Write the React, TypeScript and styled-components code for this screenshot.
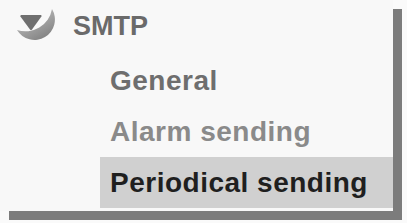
import React from 'react';
import styled, { createGlobalStyle } from 'styled-components';

const GlobalStyle = createGlobalStyle`
  html, body {
    margin: 0;
    padding: 0;
    height: 100%;
    background: #fafafa;
    font-family: "Liberation Sans", Arial, sans-serif;
  }
`;

const Page = styled.div`
  width: 407px;
  height: 223px;
  overflow: hidden;
`;

const Panel = styled.div`
  width: 393px;
  height: 211px;
  background: #f8f8f8;
  box-shadow: 9px 9px 0 #7c7c7c;
  display: flex;
  flex-direction: column;
`;

const Header = styled.div`
  height: 55px;
  flex: none;
  display: flex;
  align-items: flex-start;
  padding-left: 14px;
  gap: 17px;
`;

const Toggle = styled.svg`
  width: 42px;
  height: 38px;
  margin-top: 6px;
  flex: none;
`;

const HeaderLabel = styled.span`
  font-size: 27px;
  font-weight: bold;
  line-height: 47px;
  padding-top: 3px;
  color: #6a6a6a;
`;

const Items = styled.ul`
  list-style: none;
  margin: 0;
  padding: 0 0 0 100px;
`;

const Item = styled.li<{ $active?: boolean; $tone: string }>`
  height: 51px;
  line-height: 51px;
  padding-left: 10px;
  font-size: 28px;
  font-weight: bold;
  letter-spacing: 0.5px;
  color: ${(p) => p.$tone};
  background: ${(p) => (p.$active ? '#d0d0d0' : 'transparent')};
`;

const items = [
  { label: 'General', tone: '#6e6e6e' },
  { label: 'Alarm sending', tone: '#8a8a8a' },
  { label: 'Periodical sending', tone: '#1f1f1f', active: true },
];

export default function App() {
  return (
    <Page>
      <GlobalStyle />
      <Panel>
        <Header>
          <Toggle viewBox="0 0 42 38">
            <defs>
              <linearGradient id="swoosh" x1="0" y1="0.1" x2="0.6" y2="1">
                <stop offset="0" stopColor="#e6e6e6" />
                <stop offset="0.45" stopColor="#aaaaaa" />
                <stop offset="1" stopColor="#858585" />
              </linearGradient>
            </defs>
            <path d="M3 24 A19.5 19.5 0 1 0 38 3 A27 27 0 0 1 3 24 Z" fill="url(#swoosh)" />
            <path d="M7 9 L27 9 Q28 9.5 27.4 10.6 L18 23.5 Q17 24.5 16 23.5 L6.4 10.6 Q6 9.5 7 9 Z" fill="#6f6f6f" />
          </Toggle>
          <HeaderLabel>SMTP</HeaderLabel>
        </Header>
        <Items>
          {items.map((it) => (
            <Item key={it.label} $tone={it.tone} $active={it.active}>
              {it.label}
            </Item>
          ))}
        </Items>
      </Panel>
    </Page>
  );
}
